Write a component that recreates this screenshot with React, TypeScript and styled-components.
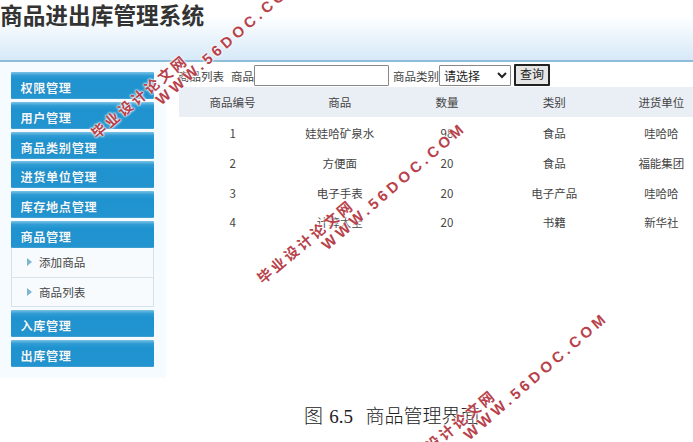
import React from "react";
import styled, { createGlobalStyle } from "styled-components";

const Global = createGlobalStyle`
  html, body { margin: 0; padding: 0; background: #fff; }
  body { width: 693px; height: 442px; overflow: hidden; font-family: "Noto Sans CJK SC", "Noto Sans", sans-serif; }
`;
const Page = styled.div`
  position: relative; width: 693px; height: 442px; overflow: hidden;
  display: flex; flex-direction: column;
`;
const Header = styled.header`
  height: 60px; flex: none; border-bottom: 2px solid #8dbdd8;
  background: linear-gradient(180deg, #ffffff 0%, #ffffff 25%, #d6e9f8 100%);
`;
const Title = styled.h1`
  margin: 0; font-size: 22.7px; line-height: 30px; font-weight: 700; color: #333; white-space: nowrap;
`;
const Body = styled.div`display: flex; flex: none; height: 316px;`;
const Sidebar = styled.aside`
  width: 166px; flex: none; box-sizing: border-box; padding: 10px 12px 0 11px; background: #f5fbfe;
`;
const MenuHead = styled.div`
  box-sizing: border-box; height: 27px; margin-bottom: 2.8px; padding: 6px 0 0 9.5px;
  border-radius: 1px; border-bottom: 1px solid #3f9ed0;
  background: linear-gradient(180deg, #79c2e4 0%, #2f9cd4 14%, #1f93cf 30%, #2295d0 100%);
  color: #eef8fd; font-size: 12.2px; line-height: 20px; font-weight: 700; letter-spacing: 0.6px;
  text-shadow: 0 0 1px #17699a;
`;
const SubMenu = styled.div`
  margin: -3px 0 3px; background: #f8fbfe; border: 1px solid #d6e2ea; border-top: 0;
`;
const SubItem = styled.div`
  display: flex; align-items: center; height: 29px; box-sizing: border-box; padding-left: 15px;
  color: #444; font-size: 11.6px;
  & + & { border-top: 1px solid #d9e4ec; }
`;
const Arrow = styled.svg`width: 5px; height: 8px; margin-right: 7px; flex: none;`;
const Main = styled.main`flex: 1; min-width: 0; padding: 1px 0 0 12px; margin-top: -1px;`;
const Toolbar = styled.div`
  display: flex; align-items: flex-end; height: 24px; margin-bottom: 1px; color: #444; font-size: 11.5px; line-height: 20px; white-space: nowrap;
`;
const Label = styled.span<{ $gap?: number }>`margin-left: ${(p) => p.$gap ?? 0}px;`;
const TextInput = styled.input`
  box-sizing: border-box; width: 135px; height: 21px; margin: 0; padding: 0 3px; background: #fff;
  border: 1px solid #888; border-radius: 1px;
`;
const Select = styled.select`
  box-sizing: border-box; width: 72px; height: 21px; margin: 0; padding: 0; background: #fff;
  border: 1px solid #888; border-radius: 1px; color: #222; font: 12px "Noto Sans CJK SC", sans-serif;
`;
const Button = styled.button`
  box-sizing: border-box; width: 36px; height: 22px; margin: 0 0 0 3px; padding: 0 0 3px; background: #e6e6e6;
  border: 2px solid #222; border-radius: 1px; color: #222; font: 12px/16px "Noto Sans CJK SC", sans-serif;
`;
const Table = styled.table`
  width: 536px; margin-left: 1px; table-layout: fixed; border-collapse: collapse; color: #444; font-size: 11.5px;
`;
const HeadRow = styled.tr`background: #eaeef5; height: 30px;`;
const Row = styled.tr`height: 29.7px;`;
const Th = styled.th`font-weight: 400; padding: 0; text-align: center;`;
const Td = styled.td`padding: 3px 0 0; text-align: center; white-space: nowrap; line-height: 16px;`;
const Caption = styled.div`
  padding: 27px 0 0 304px; font: 300 19px/24px "Liberation Serif", "Noto Sans CJK SC", serif; color: #222; white-space: pre; word-spacing: 1.5px;
`;
const Mark = styled.div<{ $x: number; $y: number; $wide?: boolean }>`
  position: absolute; left: ${(p) => p.$x}px; top: ${(p) => p.$y}px; transform-origin: 0 50%; transform: rotate(${(p) => (p.$wide ? -41 : -40)}deg);
  color: #b8424b; font-weight: 700; white-space: nowrap; line-height: 18px; pointer-events: none;
  font-family: ${(p) => (p.$wide ? '"Liberation Sans", sans-serif' : '"Noto Sans CJK SC", sans-serif')};
  font-size: ${(p) => (p.$wide ? 15 : 14.5)}px;
  letter-spacing: ${(p) => (p.$wide ? 3.9 : 2.8)}px;
  text-shadow: 0 0 2px #fff, 0 0 2px #fff, 0 0 3px #fff;
`;

const rows = [
  ["1", "娃娃哈矿泉水", "98", "食品", "哇哈哈"],
  ["2", "方便面", "20", "食品", "福能集团"],
  ["3", "电子手表", "20", "电子产品", "哇哈哈"],
  ["4", "计算大全", "20", "书籍", "新华社"],
];
const marks = [
  [93, 135],
  [259, 280],
  [401, 470],
];
const urls = [
  [158, 102],
  [324, 247],
  [466, 437],
];

function Tri() {
  return (
    <Arrow viewBox="0 0 5 8">
      <path d="M0 0L5 4L0 8Z" fill="#7fb6cf" />
    </Arrow>
  );
}

export default function App() {
  return (
    <Page>
      <Global />
      <Header>
        <Title>商品进出库管理系统</Title>
      </Header>
      <Body>
        <Sidebar>
          {["权限管理", "用户管理", "商品类别管理", "进货单位管理", "库存地点管理", "商品管理"].map((t) => (
            <MenuHead key={t}>{t}</MenuHead>
          ))}
          <SubMenu>
            <SubItem><Tri />添加商品</SubItem>
            <SubItem><Tri />商品列表</SubItem>
          </SubMenu>
          <MenuHead>入库管理</MenuHead>
          <MenuHead>出库管理</MenuHead>
        </Sidebar>
        <Main>
          <Toolbar>
            <Label>商品列表</Label>
            <Label $gap={7}>商品</Label>
            <TextInput />
            <Label $gap={4}>商品类别</Label>
            <Select defaultValue="">
              <option value="">请选择</option>
            </Select>
            <Button>查询</Button>
          </Toolbar>
          <Table>
            <thead>
              <HeadRow>
                {["商品编号", "商品", "数量", "类别", "进货单位"].map((h) => (
                  <Th key={h}>{h}</Th>
                ))}
              </HeadRow>
            </thead>
            <tbody>
              {rows.map((r) => (
                <Row key={r[0]}>
                  {r.map((c, i) => (
                    <Td key={i}>{c}</Td>
                  ))}
                </Row>
              ))}
            </tbody>
          </Table>
        </Main>
      </Body>
      <Caption>图 6.5  商品管理界面</Caption>
      {marks.map(([x, y]) => (
        <Mark key={x} $x={x} $y={y - 9}>毕业设计论文网</Mark>
      ))}
      {urls.map(([x, y]) => (
        <Mark key={x} $wide $x={x} $y={y - 9}>WWW.56DOC.COM</Mark>
      ))}
    </Page>
  );
}
